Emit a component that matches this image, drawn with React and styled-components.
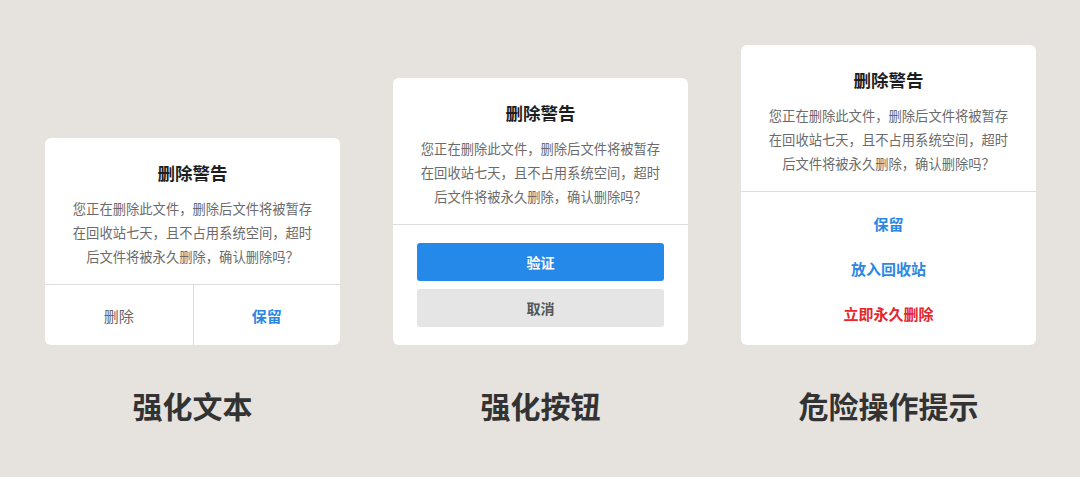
import React from 'react';
import styled, { createGlobalStyle } from 'styled-components';

const GlobalStyle = createGlobalStyle`
  html, body {
    margin: 0;
    padding: 0;
    background: #e6e3df;
    font-family: "Noto Sans CJK SC", "Noto Sans", sans-serif;
  }
`;

const BODY = '您正在删除此文件，删除后文件将被暂存在回收站七天，且不占用系统空间，超时后文件将被永久删除，确认删除吗？';

const Page = styled.div`
  height: 477px;
  box-sizing: border-box;
  padding: 45px 44px 0 45px;
  display: grid;
  grid-template-columns: repeat(3, 295px);
  grid-template-rows: 300px auto;
  column-gap: 53px;
`;

const Slot = styled.div`
  display: flex;
  align-items: flex-end;
`;

const Card = styled.div`
  width: 100%;
  background: #fff;
  border-radius: 6px;
  overflow: hidden;
`;

const Header = styled.div`
  padding: 23px 24px 15px;
  text-align: center;
  border-bottom: 1px solid #dcdcdc;
`;

const Title = styled.h3`
  margin: 0 0 12px;
  font-size: 17.5px;
  line-height: 24px;
  font-weight: 700;
  color: #1e1e1e;
`;

const Text = styled.p`
  margin: 0;
  font-size: 13.3px;
  line-height: 24px;
  color: #6b6b6b;
`;

const SplitFooter = styled.div`
  display: grid;
  grid-template-columns: 1fr 1fr;
  height: 60px;
`;

const SplitAction = styled.div`
  display: flex;
  align-items: center;
  justify-content: center;
  font-size: 15px;
  font-weight: ${p => (p.$primary ? 700 : 400)};
  color: ${p => (p.$primary ? '#2b88e2' : '#666')};
  & + & {
    border-left: 1px solid #dcdcdc;
  }
`;

const ButtonStack = styled.div`
  display: flex;
  flex-direction: column;
  gap: 8px;
  padding: 18px 24px;
`;

const Button = styled.div`
  height: 38px;
  border-radius: 3px;
  display: flex;
  align-items: center;
  justify-content: center;
  font-size: 14px;
  font-weight: 700;
  background: ${p => (p.$primary ? '#2589ea' : '#e5e5e5')};
  color: ${p => (p.$primary ? '#fff' : '#555')};
`;

const ActionList = styled.div`
  display: flex;
  flex-direction: column;
  padding: 9px 0;
`;

const ListAction = styled.div`
  height: 45px;
  display: flex;
  align-items: center;
  justify-content: center;
  font-size: 15px;
  font-weight: 700;
  color: ${p => (p.$danger ? '#e5262b' : '#2b88e2')};
`;

const Label = styled.div`
  margin-top: 42px;
  text-align: center;
  font-size: 30px;
  line-height: 36px;
  font-weight: 700;
  color: #333;
`;

const DialogHeader = () => (
  <Header>
    <Title>删除警告</Title>
    <Text>{BODY}</Text>
  </Header>
);

const App = () => (
  <>
    <GlobalStyle />
    <Page>
      <Slot>
        <Card>
          <DialogHeader />
          <SplitFooter>
            <SplitAction>删除</SplitAction>
            <SplitAction $primary>保留</SplitAction>
          </SplitFooter>
        </Card>
      </Slot>
      <Slot>
        <Card>
          <DialogHeader />
          <ButtonStack>
            <Button $primary>验证</Button>
            <Button>取消</Button>
          </ButtonStack>
        </Card>
      </Slot>
      <Slot>
        <Card>
          <DialogHeader />
          <ActionList>
            <ListAction>保留</ListAction>
            <ListAction>放入回收站</ListAction>
            <ListAction $danger>立即永久删除</ListAction>
          </ActionList>
        </Card>
      </Slot>
      <Label>强化文本</Label>
      <Label>强化按钮</Label>
      <Label>危险操作提示</Label>
    </Page>
  </>
);

export default App;
